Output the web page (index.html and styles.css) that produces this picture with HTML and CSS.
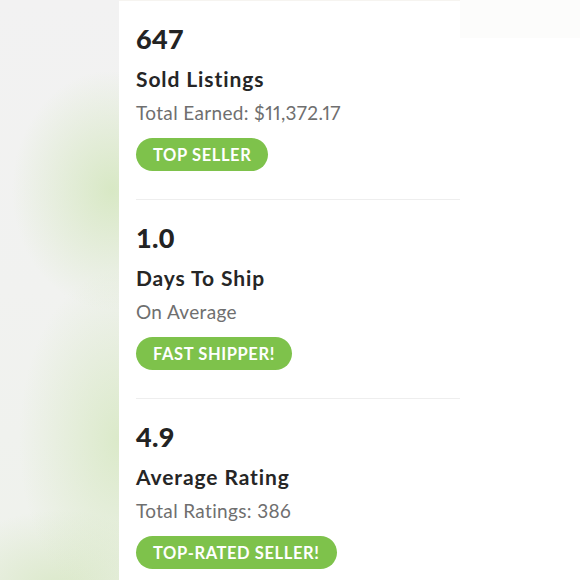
FILE: index.html
```html
<!DOCTYPE html>
<html>
<head>
<meta charset="utf-8">
<link rel="stylesheet" href="styles.css">
</head>
<body>
<div class="page">
  <div class="side side-left"></div>
  <main class="card">
    <section class="stat">
      <div class="num">647</div>
      <div class="title">Sold Listings</div>
      <div class="sub">Total Earned: $11,372.17</div>
      <span class="badge">TOP SELLER</span>
    </section>
    <section class="stat">
      <div class="num">1.0</div>
      <div class="title">Days To Ship</div>
      <div class="sub">On Average</div>
      <span class="badge">FAST SHIPPER!</span>
    </section>
    <section class="stat">
      <div class="num">4.9</div>
      <div class="title">Average Rating</div>
      <div class="sub">Total Ratings: 386</div>
      <span class="badge">TOP-RATED SELLER!</span>
    </section>
  </main>
  <div class="side side-right"></div>
</div>
</body>
</html>
```
FILE: styles.css
```css
* { box-sizing: border-box; }
html, body { margin: 0; padding: 0; }
body {
  width: 580px;
  height: 580px;
  overflow: hidden;
  font-family: Lato, "Liberation Sans", sans-serif;
  background: #fff;
}
.page {
  display: flex;
  height: 580px;
}
.side-left {
  width: 119px;
  flex: none;
  background:
    radial-gradient(ellipse 100px 120px at 112px 190px, rgba(205,228,178,0.7), rgba(205,228,178,0) 100%),
    radial-gradient(ellipse 100px 170px at 119px 440px, rgba(210,230,186,0.7), rgba(210,230,186,0) 100%),
    radial-gradient(ellipse 120px 80px at 60px 590px, rgba(205,226,178,0.6), rgba(205,226,178,0) 100%),
    linear-gradient(180deg, #f2f2f2 0%, #f1f2f0 50%, #eff2ec 100%);
}
.side-right {
  flex: 1;
  background:
    linear-gradient(#fcfcfb, #fcfcfb) 0 0 / 100% 38px no-repeat,
    #fff;
}
.card {
  width: 341px;
  flex: none;
  background: #fff;
  padding-left: 17px;
  border-top: 1px solid #f6f4f0;
}
.stat {
  padding: 21px 0 28px;
  border-bottom: 1px solid #eeeeee;
}
.num {
  font-size: 27px;
  line-height: 34px;
  font-weight: 900;
  color: #232323;
  letter-spacing: 0.3px;
}
.title {
  margin-top: 9px;
  font-size: 21px;
  line-height: 28px;
  font-weight: 700;
  color: #262626;
  letter-spacing: 0.9px;
}
.sub {
  margin-top: 7px;
  font-size: 19px;
  line-height: 26px;
  color: #6f6f6f;
  font-variant-numeric: proportional-nums;
  letter-spacing: 0.35px;
}
.badge {
  display: inline-flex;
  align-items: center;
  margin-top: 12px;
  height: 33px;
  padding: 0 17px;
  border-radius: 17px;
  background: #7ec24b;
  color: #fff;
  font-size: 16.5px;
  font-weight: 700;
  letter-spacing: 0.6px;
}
```
